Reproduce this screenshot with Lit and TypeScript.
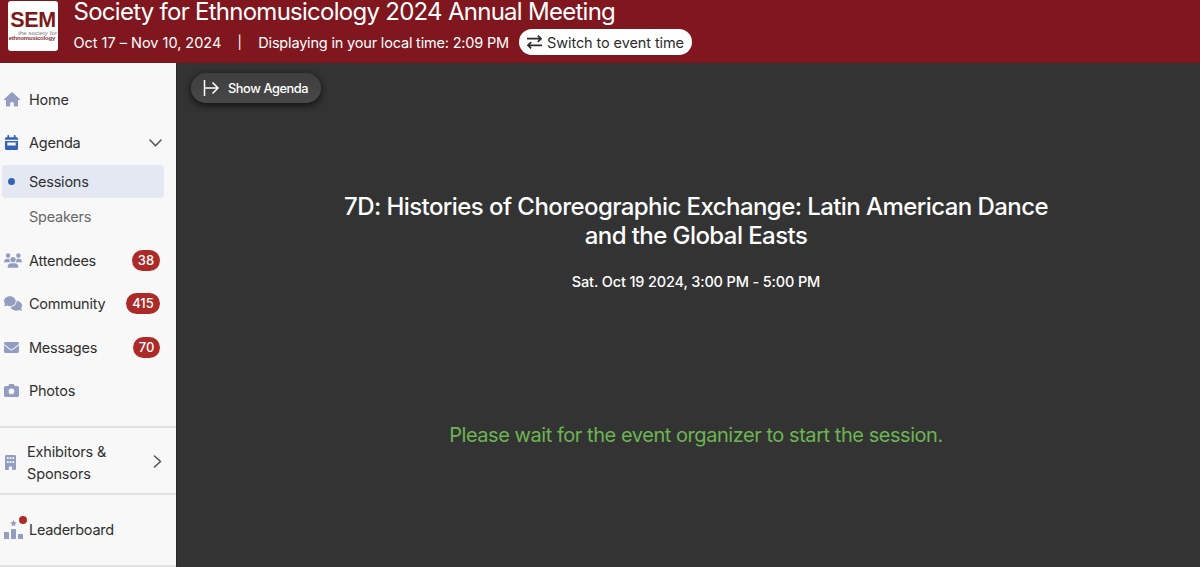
import { LitElement, html, css, svg } from "lit";
import { customElement } from "lit/decorators.js";

const icons = {
  home: svg`<svg class="icon" width="16" height="15" viewBox="0 0 16 15"><path d="M7.3.4a1 1 0 0 1 1.4 0l7 6.5c.5.5.3 1.1-.4 1.1H14v5.6c0 .7-.4 1-1 1h-2.400c-.5 0-.8-.3-.8-.8v-2.600c0-.6-.4-1-1-1H7.200c-.6 0-1 .4-1 1v2.600c0 .5-.3.8-.8.8H3c-.6 0-1-.3-1-1V8H.7C0 8-.2 7.400.3 6.900z"/></svg>`,
  agenda: svg`<svg class="icon blue nudge" width="13" height="15" viewBox="0 0 13 14" preserveAspectRatio="none"><path d="M3.300 0c.6 0 .9.4.9.900V2h4.600V.9c0-.5.4-.9.900-.9s.9.4.9.900V2h1c.8 0 1.400.6 1.400 1.300V4.500H0V3.300C0 2.600.6 2 1.400 2h1V.9c0-.5.4-.9.900-.9z"/><path fill-rule="evenodd" d="M0 5.500h13v7.100c0 .8-.6 1.400-1.400 1.400H1.400C.6 14 0 13.400 0 12.600zM2.300 7v2.800h8.400V7z"/></svg>`,
  attendees: svg`<svg class="icon" width="18" height="15" viewBox="0 0 640 512"><path d="M144 0a80 80 0 1 1 0 160A80 80 0 1 1 144 0zM512 0a80 80 0 1 1 0 160A80 80 0 1 1 512 0zM0 298.700C0 239.800 47.800 192 106.700 192h42.700c15.900 0 31 3.500 44.600 9.700-1.300 7.200-1.900 14.700-1.900 22.300 0 38.200 16.800 72.500 43.300 96H21.300C9.600 320 0 310.400 0 298.700zM405.300 320h-.7c26.600-23.500 43.300-57.800 43.300-96 0-7.600-.7-15-1.900-22.300 13.600-6.300 28.700-9.700 44.600-9.700h42.700C592.200 192 640 239.800 640 298.700c0 11.800-9.600 21.300-21.300 21.300H405.300zM224 224a96 96 0 1 1 192 0 96 96 0 1 1-192 0zM128 485.300C128 411.700 187.700 352 261.300 352h117.300C452.300 352 512 411.700 512 485.300c0 14.700-11.900 26.700-26.700 26.700H154.700c-14.700 0-26.700-11.900-26.700-26.700z"/></svg>`,
  community: svg`<svg class="icon" width="18" height="15" viewBox="0 0 640 512"><path d="M208 352c114.900 0 208-78.800 208-176S322.900 0 208 0 0 78.800 0 176c0 38.600 14.700 74.300 39.600 103.400-3.500 9.400-8.700 17.700-14.200 24.700-4.800 6.200-9.700 11-13.300 14.300-7.500 6.800-12.100 12.300-12.100 17.600 0 9 7 16 16 16 21.900 0 44-5.600 62.300-12.600 9.200-3.500 17.800-7.400 25.300-11.400C134.100 343.300 169.800 352 208 352zM448 176c0 112.300-99.100 196.900-216.500 207C255.800 457.400 336.400 512 432 512c38.200 0 73.900-8.700 104.700-23.900 7.500 4 16 7.900 25.200 11.400 18.300 7 40.500 12.500 62.200 12.500 9 0 16-7 16-16 0-5-4.600-10.500-12.100-17.500-3.600-3.300-8.500-8.100-13.300-14.300-5.500-7-10.700-15.400-14.200-24.700 24.900-29 39.600-64.700 39.600-103.400 0-92.800-84.900-168.900-192.600-175.500.4 5.100.6 10.300.6 15.500z"/></svg>`,
  messages: svg`<svg class="icon" width="15" height="11" viewBox="0 0 15 11"><path d="M1.400 0h12.200c.8 0 1.400.6 1.400 1.400 0 .5-.2.900-.6 1.100L8.100 7.200a1 1 0 0 1-1.200 0L.6 2.500C.2 2.300 0 1.900 0 1.400 0 .6.6 0 1.400 0zM0 3.300l6.300 4.700c.7.500 1.700.5 2.400 0L15 3.300v5.900c0 1-.8 1.800-1.800 1.800H1.800C.8 11 0 10.200 0 9.200z"/></svg>`,
  photos: svg`<svg class="icon" width="15" height="13" viewBox="0 0 15 13"><path fill-rule="evenodd" d="M4.700.9C4.900.3 5.300 0 5.900 0h3.200c.6 0 1 .3 1.200.9l.4 1h2.500c1 0 1.800.8 1.800 1.800v7.500c0 1-.8 1.800-1.800 1.800H1.800C.8 13 0 12.200 0 11.200V3.700c0-1 .8-1.800 1.800-1.800h2.500zM7.500 4.600a2.800 2.800 0 1 0 0 5.600 2.800 2.800 0 0 0 0-5.600z"/></svg>`,
  building: svg`<svg class="icon nudge" width="11" height="15" viewBox="0 0 11 15"><path fill-rule="evenodd" d="M1.300 0h8.400c.7 0 1.300.6 1.300 1.300v12.400c0 .7-.6 1.300-1.300 1.300H7.200v-2c0-1-.7-1.700-1.700-1.700S3.800 12 3.800 13v2H1.300C.6 15 0 14.400 0 13.700V1.300C0 .6.6 0 1.300 0zM1.900 2.300v1.800h1.800V2.300zm2.700 0v1.800h1.800V2.300zm2.700 0v1.800h1.800V2.300zM1.900 6.200V8h1.800V6.200zm2.700 0V8h1.800V6.200zm2.700 0V8h1.800V6.200z"/></svg>`,
  leaderboard: svg`<svg class="icon" width="19" height="19" viewBox="0 0 19 19"><path d="M9.500 0l1 2.100 2.300.3-1.700 1.600.4 2.300-2-1.100-2 1.100.4-2.300L6.200 2.400 8.500 2.100z"/><rect y="12" width="5" height="7" rx=".8"/><rect x="7" y="9" width="5" height="10" rx=".8"/><rect x="14" y="14" width="5" height="5" rx=".8"/></svg>`,
};

@customElement("app-root")
export class AppRoot extends LitElement {
  static styles = css`
    :host { display: flex; flex-direction: column; width: 100%; height: 567px; overflow: hidden; font-family: Inter, "Liberation Sans", sans-serif; font-size: 14.5px; color: #303030; }
    * { box-sizing: border-box; }
    svg { display: block; flex: none; }
    header { flex: none; height: 63px; background: #80171f; color: #fff; display: flex; padding-left: 8px; gap: 15.500px; }
    .logo { width: 50px; height: 50px; margin-top: 1px; border-radius: 3px; background: #fff; font-family: "Liberation Sans", Arial, sans-serif; padding-top: 9px; text-align: right; flex: none; }
    .logo div { white-space: nowrap; }
    .sem { font-weight: bold; font-size: 21.5px; line-height: 20px; color: #7d1a17; text-align: center; letter-spacing: -.3px; }
    .soc { font-size: 6px; line-height: 6px; color: #777; padding-right: 1px; letter-spacing: .1px; }
    .eth { font-size: 6px; font-weight: bold; line-height: 5px; color: #8c2f38; padding-right: 3px; letter-spacing: -.22px; }
    .title { font-size: 24px; line-height: 24px; white-space: nowrap; letter-spacing: -.73px; }
    .meta { display: flex; align-items: center; height: 26px; margin-top: 5px; white-space: nowrap; }
    .dates { letter-spacing: -.02px; }
    .local { letter-spacing: -.18px; }
    .stxt { letter-spacing: -.1px; }
    .bar { width: 37px; text-align: center; font-size: 13px; }
    .switch { display: flex; align-items: center; gap: 5px; width: 173px; height: 26px; border-radius: 13px; background: #fff; color: #2b2b2b; margin-left: 10px; padding-left: 8px; }
    .body { flex: 1; display: flex; min-height: 0; }
    nav { flex: none; width: 176px; background: #f8f8f8; padding-top: 13.500px; border-top: 1px solid #fff; display: flex; flex-direction: column; letter-spacing: -.24px; }
    .row { flex: none; display: flex; align-items: center; height: 43.5px; padding: 0 16px 0 4px; }
    .slot { flex: none; width: 25px; }
    .label { flex: 1; white-space: nowrap; }
    .icon { fill: #929dbf; }
    .nudge { margin-left: 1px; }
    .blue { fill: #3563b8; }
    .chev { fill: none; stroke: #555; stroke-width: 1.600; stroke-linecap: round; stroke-linejoin: round; }
    .down { margin-right: -2px; }
    .badge { height: 21px; border-radius: 11px; background: #ac2b29; color: #fff; font-size: 13px; line-height: 20px; font-weight: 500; text-align: center; letter-spacing: 0; }
    .sub { flex: none; display: flex; align-items: center; height: 33px; margin: .5px 12px 0 2px; padding-left: 6px; border-radius: 4px; }
    .sub .slot { width: 21px; }
    .active { background: #e3e8f2; }
    .dot { display: block; width: 7px; height: 7px; border-radius: 50%; background: #3563b8; }
    .muted { color: #686868; margin-top: 2px; margin-bottom: 5.500px; }
    .group { flex: none; border-top: 2px solid #e2e2e2; display: flex; align-items: center; padding: 0 14px 0 4px; }
    .ex { height: 67px; margin-top: 13px; padding-top: 5px; line-height: 22px; letter-spacing: -.15px; }
    .ex .chev { margin-bottom: 2px; }
    .lead { height: 72px; padding-top: 0; letter-spacing: -.28px; }
    .mark { position: relative; }
    .alert { position: absolute; left: 15px; top: -4px; width: 8px; height: 8px; border-radius: 50%; background: #ac2b29; }
    main { flex: 1; background: #333; color: #fff; display: flex; flex-direction: column; align-items: center; padding-top: 10px; padding-left: 15px; border-left: 1px solid #2a2a2a; }
    .show { align-self: flex-start; display: flex; align-items: center; gap: 8px; width: 130px; height: 30px; margin-left: -1px; border-radius: 15px; padding-left: 12px; background: linear-gradient(#3e3e3e, #484848); box-shadow: 0 2px 6px 1px #161616; font-size: 12.8px; font-weight: 500; letter-spacing: -.42px; white-space: nowrap; }
    .show svg { fill: none; stroke: #fff; stroke-width: 1.500; }
    h1 { margin: 89px 0 0 0; font-size: 24px; line-height: 29px; font-weight: 500; text-align: center; white-space: nowrap; letter-spacing: -.57px; }
    .when { margin-top: 22px; line-height: 20px; font-weight: 500; font-size: 14.5px; white-space: nowrap; letter-spacing: -.15px; }
    .wait { margin-top: 130px; font-size: 20px; line-height: 26px; color: #6cb552; white-space: nowrap; letter-spacing: -.45px; }
  `;

  row(icon: unknown, label: string, badge = 0, width = 0) {
    return html`<div class="row"><span class="slot">${icon}</span><span class="label">${label}</span>
      ${badge ? html`<span class="badge" style="width:${width}px">${badge}</span>` : ""}</div>`;
  }

  render() {
    return html`
      <header>
        <div class="logo"><div class="sem">SEM</div><div class="soc">the society for</div><div class="eth">ethnomusicology</div></div>
        <div>
          <div class="title">Society for Ethnomusicology 2024 Annual Meeting</div>
          <div class="meta"><span class="dates">Oct 17 – Nov 10, 2024</span><span class="bar">|</span><span class="local">Displaying in your local time: 2:09 PM</span>
            <span class="switch"><svg width="15" height="14" viewBox="0 0 15 14" fill="none" stroke="#2b2b2b" stroke-width="1.700"><path d="M0 3.700H14M10.800.6l3.300 3.100-3.300 3.100M15 10.300H1M4.200 7.200L.9 10.300l3.300 3.100"/></svg><span class="stxt">Switch to event time</span></span></div>
        </div>
      </header>
      <div class="body">
        <nav>
          ${this.row(icons.home, "Home")}
          <div class="row"><span class="slot">${icons.agenda}</span><span class="label">Agenda</span><svg class="chev down" width="13" height="8" viewBox="0 0 13 8"><path d="M1 1l5.500 5.700L12 1"/></svg></div>
          <div class="sub active"><span class="slot"><span class="dot"></span></span><span>Sessions</span></div>
          <div class="sub muted"><span class="slot"></span><span>Speakers</span></div>
          ${this.row(icons.attendees, "Attendees", 38, 28)}
          ${this.row(icons.community, "Community", 415, 34)}
          ${this.row(icons.messages, "Messages", 70, 27)}
          ${this.row(icons.photos, "Photos")}
          <div class="group ex"><span class="slot" style="width:23px">${icons.building}</span><span class="label">Exhibitors &amp;<br>Sponsors</span><svg class="chev" width="9" height="13" viewBox="0 0 9 13"><path d="M1.500 1l6 5.500-6 5.500"/></svg></div>
          <div class="group lead"><span class="slot mark">${icons.leaderboard}<i class="alert"></i></span><span class="label">Leaderboard</span></div>
          <div class="group"></div>
        </nav>
        <main>
          <div class="show"><svg width="17" height="16" viewBox="0 0 17 16"><path d="M1.500 0v16M2 8h13M9.500 2.500L15 8l-5.500 5.500"/></svg><span>Show Agenda</span></div>
          <h1>7D: Histories of Choreographic Exchange: Latin American Dance<br>and the Global Easts</h1>
          <div class="when">Sat. Oct 19 2024, 3:00 PM - 5:00 PM</div>
          <div class="wait">Please wait for the event organizer to start the session.</div>
        </main>
      </div>`;
  }
}
